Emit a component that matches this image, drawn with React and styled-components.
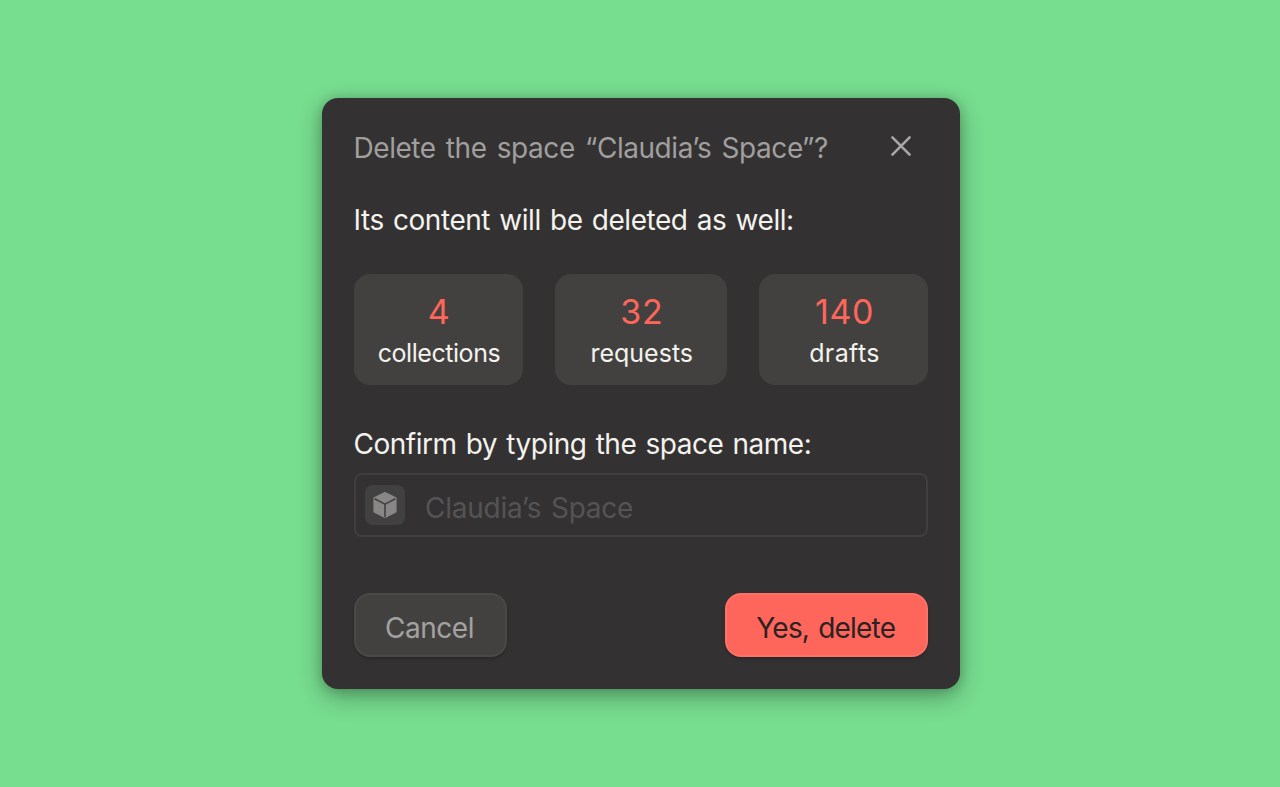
import React from 'react';
import styled, { createGlobalStyle } from 'styled-components';

const Global = createGlobalStyle`
  * { box-sizing: border-box; }
  body { margin: 0; background: #77dd8f; font-family: "Inter", "Liberation Sans", sans-serif; }
`;
const Stage = styled.main`
  height: 787px;
  padding: 98px 0 0 321.5px;
  overflow: hidden;
`;
const Dialog = styled.section`
  width: 638.5px;
  height: 591px;
  padding: 32px 32px;
  border-radius: 16px;
  background: #333132;
  box-shadow: 0 8px 24px rgba(0, 0, 0, 0.3), 0 1px 12px rgba(0, 0, 0, 0.18);
  display: flex;
  flex-direction: column;
`;
const Header = styled.header`
  display: flex;
  justify-content: space-between;
  height: 36px;
`;
const Line = styled.span`
  display: block;
  width: max-content;
  white-space: nowrap;
  font-size: ${(p) => p.$size || 28}px;
  font-weight: 430;
  line-height: 36px;
  letter-spacing: ${(p) => p.$track || 0}px;
  word-spacing: ${(p) => p.$space || 0}px;
  color: ${(p) => p.$color || '#f3f2ed'};
`;
const CloseButton = styled.button`
  width: 24px;
  height: 24px;
  margin: 4px 15px 0 0;
  padding: 0;
  border: 0;
  background: none;
  color: #a9a8a7;
  svg { display: block; }
`;
const Message = styled.div`
  margin-top: 36px;
`;
const Stats = styled.div`
  display: grid;
  grid-template-columns: 169px 172px 169px;
  justify-content: space-between;
  margin-top: 36px;
`;
const Stat = styled.div`
  height: 111px;
  border-radius: 16px;
  background: #424140;
  display: flex;
  flex-direction: column;
  align-items: center;
  gap: 3px;
  padding: 18px 0 0 2px;
`;
const Count = styled(Line)`
  color: #ff665b;
  font-weight: 400;
  line-height: 40px;
`;
const Field = styled.label`
  display: block;
  margin-top: 41px;
`;
const InputBox = styled.div`
  height: 64px;
  margin-top: 11px;
  border: 2px solid #403f3e;
  border-radius: 8px;
  display: flex;
  align-items: center;
  padding-left: 9.5px;
  gap: 20px;
`;
const Placeholder = styled(Line)`
  padding-top: 5px;
  color: #555454;
`;
const CubeTile = styled.span`
  width: 40px;
  height: 40px;
  border-radius: 8px;
  background: #424141;
  display: grid;
  place-items: center;
`;
const Actions = styled.footer`
  display: flex;
  justify-content: space-between;
  margin-top: 56px;
`;
const Button = styled.button`
  width: ${(p) => p.$width}px;
  height: 64px;
  padding: 5px 1px 0 0;
  border: 2px solid ${(p) => (p.$danger ? '#ff7067' : '#4a4947')};
  border-radius: 16px;
  background: ${(p) => (p.$danger ? '#ff665b' : '#424140')};
  box-shadow: 0 2px 3px rgba(0, 0, 0, 0.2);
  font-family: inherit;
  display: flex;
  align-items: center;
  justify-content: center;
`;

const CloseIcon = () => (
  <svg width="24" height="24" viewBox="0 0 24 24" fill="none" stroke="currentColor" strokeWidth="2.6" strokeLinecap="round">
    <path d="M3.4 3.4L20.6 20.6M20.6 3.4L3.4 20.6" />
  </svg>
);
const CubeIcon = () => (
  <svg width="26" height="28" viewBox="0 0 26 28">
    <path
      d="M13 2L23.6 7.2V20.6L13 26L2.4 20.6V7.2Z"
      fill="#888786"
      stroke="#888786"
      strokeWidth="2"
      strokeLinejoin="round"
    />
    <path d="M2.6 7.8L13 13.1L23.4 7.8M13 13.1V26.2" fill="none" stroke="#424141" strokeWidth="1.6" />
  </svg>
);

const stats = [
  { count: '4', label: 'collections', track: -0.45 },
  { count: '32', label: 'requests', track: 0 },
  { count: '140', label: 'drafts', track: 0.4 },
];

export default function App() {
  return (
    <Stage>
      <Global />
      <Dialog>
        <Header>
          <Line $color="#a09f9e" $track={-0.45} $space={2.8}>Delete the space “Claudia’s Space”?</Line>
          <CloseButton aria-label="Close"><CloseIcon /></CloseButton>
        </Header>
        <Message><Line $track={-0.45} $space={1.8}>Its content will be deleted as well:</Line></Message>
        <Stats>
          {stats.map((s) => (
            <Stat key={s.label}>
              <Count $size={34} $track={0.6}>{s.count}</Count>
              <Line $size={25} $track={s.track}>{s.label}</Line>
            </Stat>
          ))}
        </Stats>
        <Field>
          <Line $track={-0.5} $space={1.9}>Confirm by typing the space name:</Line>
          <InputBox>
            <CubeTile><CubeIcon /></CubeTile>
            <Placeholder $track={-0.25} $space={2}>Claudia’s Space</Placeholder>
          </InputBox>
        </Field>
        <Actions>
          <Button $width={153}><Line $color="#a3a2a1" $track={-0.45}>Cancel</Line></Button>
          <Button $width={203.5} $danger><Line $color="#2a2223" $track={-0.8} $space={2}>Yes, delete</Line></Button>
        </Actions>
      </Dialog>
    </Stage>
  );
}
